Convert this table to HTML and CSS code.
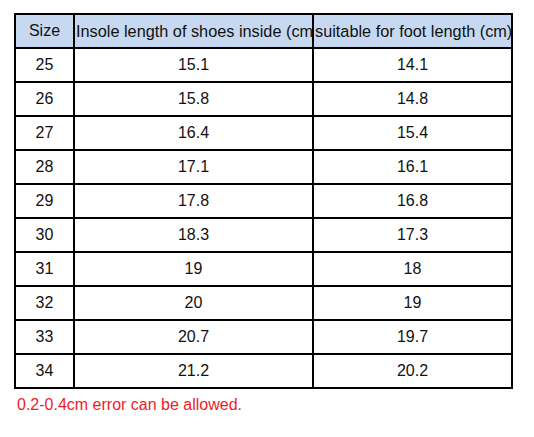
FILE: index.html
```html
<!DOCTYPE html>
<html>
<head>
<meta charset="utf-8">
<link rel="stylesheet" href="styles.css">
</head>
<body>
<div class="page">
  <table class="sizes">
    <colgroup>
      <col class="c1"><col class="c2"><col class="c3">
    </colgroup>
    <thead>
      <tr>
        <th class="center">Size</th>
        <th class="left"><div class="clip">Insole length of shoes inside (cm)</div></th>
        <th class="left"><div class="clip">suitable for foot length (cm)</div></th>
      </tr>
    </thead>
    <tbody>
      <tr><td>25</td><td>15.1</td><td>14.1</td></tr>
      <tr><td>26</td><td>15.8</td><td>14.8</td></tr>
      <tr><td>27</td><td>16.4</td><td>15.4</td></tr>
      <tr><td>28</td><td>17.1</td><td>16.1</td></tr>
      <tr><td>29</td><td>17.8</td><td>16.8</td></tr>
      <tr><td>30</td><td>18.3</td><td>17.3</td></tr>
      <tr><td>31</td><td>19</td><td>18</td></tr>
      <tr><td>32</td><td>20</td><td>19</td></tr>
      <tr><td>33</td><td>20.7</td><td>19.7</td></tr>
      <tr><td>34</td><td>21.2</td><td>20.2</td></tr>
    </tbody>
  </table>
  <p class="note">0.2-0.4cm error can be allowed.</p>
</div>
</body>
</html>
```

FILE: styles.css
```css
html, body {
  margin: 0;
  padding: 0;
  background: #ffffff;
}
.page {
  padding: 13px 0 0 14px;
  font-family: "Liberation Sans", Arial, sans-serif;
  font-size: 16px;
  color: #111111;
}
.sizes {
  border-collapse: separate;
  border-spacing: 0;
  table-layout: fixed;
  width: 499px;
  border-left: 2px solid #000;
  border-top: 2px solid #000;
}
.c1 { width: 59px; }
.c2 { width: 239px; }
.c3 { width: 199px; }
.sizes th,
.sizes td {
  height: 32px;
  padding: 0;
  border-right: 2px solid #000;
  border-bottom: 2px solid #000;
  text-align: center;
  vertical-align: middle;
  font-weight: normal;
  font-size: 16px;
  line-height: 18px;
}
.sizes th {
  background: #c6d9f0;
}
.sizes th.left {
  text-align: left;
}
.clip {
  white-space: nowrap;
  overflow: hidden;
  padding-left: 1px;
}
.clip {
  font-size: 16.3px;
}
.note {
  margin: 7px 0 0 3px;
  color: #ee1c25;
  font-size: 16px;
  line-height: 18px;
}
```
